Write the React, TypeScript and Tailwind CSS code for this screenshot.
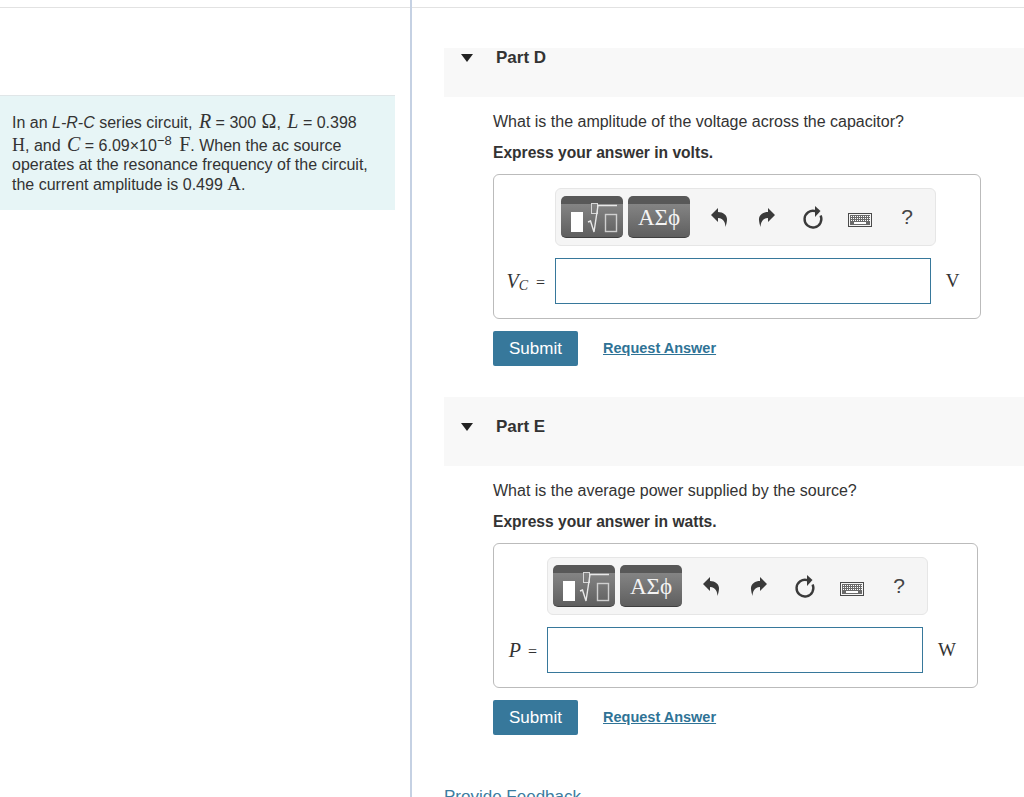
const serif = "font-['Liberation_Serif',serif]"

function UndoIcon({ flip }: { flip?: boolean }) {
  return (
    <svg width="18" height="22" viewBox="0 0 18 22" className={flip ? "-scale-x-100" : ""}>
      <path
        d="M1 9 L8 2 L8 6 C13 6 17.5 9 17 14 C16.8 17 16 19 15.4 21 C15.4 17 14 12.5 8 12 L8 16 Z"
        fill="#3a3a3a"
      />
    </svg>
  )
}

function ReloadIcon() {
  return (
    <svg width="24" height="26" viewBox="0 0 24 26">
      <path d="M14.5 7.1 A8.4 8.4 0 1 0 19.6 11.6" fill="none" stroke="#3a3a3a" strokeWidth="2.4" />
      <path d="M14 2 L19.5 7 L14 13 Z" fill="#3a3a3a" />
    </svg>
  )
}

function KeyboardIcon() {
  const row = (y: number, count: number, start: number) =>
    Array.from({ length: count }).map((_, i) => (
      <rect key={`${y}-${i}`} x={start + i * 2} y={y} width="1" height="1" fill="#fff" />
    ))
  return (
    <svg width="24" height="14" viewBox="0 0 24 14" shapeRendering="crispEdges">
      <rect x="0.5" y="0.5" width="23" height="13" fill="#f5f5f5" stroke="#4a4a4a" />
      <rect x="2" y="2" width="20" height="10" fill="#6a6a6a" />
      {row(3, 10, 3)}
      {row(5, 10, 3)}
      {row(7, 10, 3)}
      <rect x="6" y="9" width="12" height="2" fill="#fff" />
    </svg>
  )
}

function Toolbar({ className }: { className: string }) {
  return (
    <div className={`flex h-[58px] w-[381px] items-center rounded-[6px] border border-[#e6e6e6] bg-[#f5f5f5] pl-[5px] ${className}`}>
      <div className="relative h-[42px] w-[62px] overflow-hidden rounded-[5px] border-b border-[#3f3f3f] bg-[linear-gradient(#585858_0,#585858_8px,#848484_8px,#5f5f5f_100%)]">
        <svg width="62" height="42" viewBox="0 0 62 42" className="absolute inset-0">
          <rect x="10" y="16" width="12" height="20" fill="#fff" />
          <rect x="30.5" y="7.5" width="6" height="10" fill="none" stroke="#d8d8d8" />
          <path d="M27 26 L29.5 25 L33 36 L37 9.5 L56 9.5" fill="none" stroke="#e8e8e8" strokeWidth="1.4" />
          <rect x="44.5" y="18.5" width="11" height="17" fill="none" stroke="#cfcfcf" strokeWidth="1.4" />
        </svg>
      </div>
      <div className={`ml-[5px] flex h-[42px] w-[62px] items-center justify-center rounded-[5px] border-b border-[#3f3f3f] bg-[linear-gradient(#585858_0,#585858_8px,#848484_8px,#5f5f5f_100%)] pt-[3px] text-[23px] text-[#f4f4f4] ${serif}`}>
        ΑΣϕ
      </div>
      <div className="ml-[20px] flex w-[18px] justify-center"><UndoIcon /></div>
      <div className="ml-[30px] flex w-[18px] justify-center"><UndoIcon flip /></div>
      <div className="ml-[25px] flex w-[24px] justify-center"><ReloadIcon /></div>
      <div className="ml-[23px] flex w-[24px] justify-center pt-[6px]"><KeyboardIcon /></div>
      <div className="ml-[23px] w-[24px] text-center text-[21px] text-[#444]">?</div>
    </div>
  )
}

function Part({
  name,
  headerClass,
  question,
  unitsNote,
  boxClass,
  toolbarClass,
  labelClass,
  label,
  unit,
}: {
  name: string
  headerClass: string
  question: string
  unitsNote: string
  boxClass: string
  toolbarClass: string
  labelClass: string
  label: React.ReactNode
  unit: string
}) {
  return (
    <section>
      {/* Part header */}
      <div className={`ml-[32px] flex items-start bg-[#f8f8f8] ${headerClass}`}>
        <svg width="12" height="8" viewBox="0 0 12 8" className="ml-[17px] mt-[5px]">
          <path d="M0 0 L12 0 L6 8 Z" fill="#222" />
        </svg>
        <h2 className="ml-[23px] text-[17px] font-bold leading-[18px] text-[#333]">{name}</h2>
      </div>

      <div className="ml-[81px]">
        <p className="mt-[15px] text-[16px] leading-[20px] text-[#333]">{question}</p>
        <p className="mt-[11px] text-[15.6px] font-bold leading-[20px] text-[#333]">{unitsNote}</p>

        <div className={`mt-[11px] h-[145px] rounded-[6px] border border-[#bbb] pt-[13px] ${boxClass}`}>
          <Toolbar className={toolbarClass} />
          <div className="mt-[12px] flex h-[46px] items-center">
            <div className={`flex justify-end pr-[10px] text-[16px] text-[#333] ${labelClass}`}>{label}</div>
            <div className="h-[46px] w-[376px] border border-[#37789b] bg-white" />
            <div className={`flex-1 pr-[6px] text-center text-[19px] text-[#333] ${serif}`}>{unit}</div>
          </div>
        </div>

        <div className="mt-[12px] flex items-center">
          <button className="h-[35px] w-[85px] rounded-[2px] bg-[#37789b] text-[17px] text-white">Submit</button>
          <a className="ml-[25px] text-[14.5px] font-bold text-[#2f7396] underline">Request Answer</a>
        </div>
      </div>
    </section>
  )
}

export default function App() {
  return (
    <div className="flex h-[797px] overflow-hidden bg-white font-['Liberation_Sans',sans-serif]">
      {/* Left column */}
      <aside className="w-[412px] shrink-0 border-r-2 border-[#c5d1e3]">
        <div className="h-[8px] border-b border-[#e2e2e2]" />
        <div className="mt-[87px] h-[115px] w-[395px] border-t border-[#e0e6e8] bg-[#e7f5f6] px-[12px] pt-[15px] text-[16px] leading-[20px] text-[#333]">
          <p className="whitespace-nowrap">
            In an <i>L-R-C</i> series circuit, <span className={`${serif} ml-[2px] text-[20px]`}><i>R</i></span> = 300 <span className={`${serif} ml-[1px] text-[20px]`}>Ω</span>, <span className={`${serif} ml-[2px] text-[20px]`}><i>L</i></span> = 0.398
          </p>
          <p className="mt-[1px] whitespace-nowrap">
            <span className={`${serif} text-[18px]`}>H</span>, and <span className={`${serif} ml-[2px] text-[20px]`}><i>C</i></span> = 6.09×10<sup className="text-[13px] leading-none">−8</sup> <span className={`${serif} ml-[3px] text-[20px]`}>F</span>. When the ac source
          </p>
          <p className="-mt-[1px] whitespace-nowrap">operates at the resonance frequency of the circuit,</p>
          <p className="-mt-[1px] whitespace-nowrap">
            the current amplitude is 0.499 <span className={`${serif} text-[19px]`}>A</span>.
          </p>
        </div>
      </aside>

      {/* Right column */}
      <main className="flex-1">
        <div className="mb-[40px] h-[8px] border-b border-[#e2e2e2]" />
        <Part
          name="Part D"
          headerClass="h-[49px] pt-[1px]"
          question="What is the amplitude of the voltage across the capacitor?"
          unitsNote="Express your answer in volts."
          boxClass="w-[488px]"
          toolbarClass="ml-[61px]"
          labelClass="w-[61px]"
          label={<span className={serif}><i className="text-[20px]">V</i><i className="align-[-2px] text-[14px]">C</i> <span className="ml-[4px]">=</span></span>}
          unit="V"
        />
        <div className="h-[31px]" />
        <Part
          name="Part E"
          headerClass="h-[69px] pt-[21px]"
          question="What is the average power supplied by the source?"
          unitsNote="Express your answer in watts."
          boxClass="w-[485px]"
          toolbarClass="ml-[53px]"
          labelClass="w-[53px]"
          label={<span className={serif}><i className="text-[20px]">P</i> <span className="ml-[3px]">=</span></span>}
          unit="W"
        />
        <a className="ml-[32px] mt-[52px] block text-[17px] leading-[20px] text-[#3b7ca0]">Provide Feedback</a>
      </main>
    </div>
  )
}
